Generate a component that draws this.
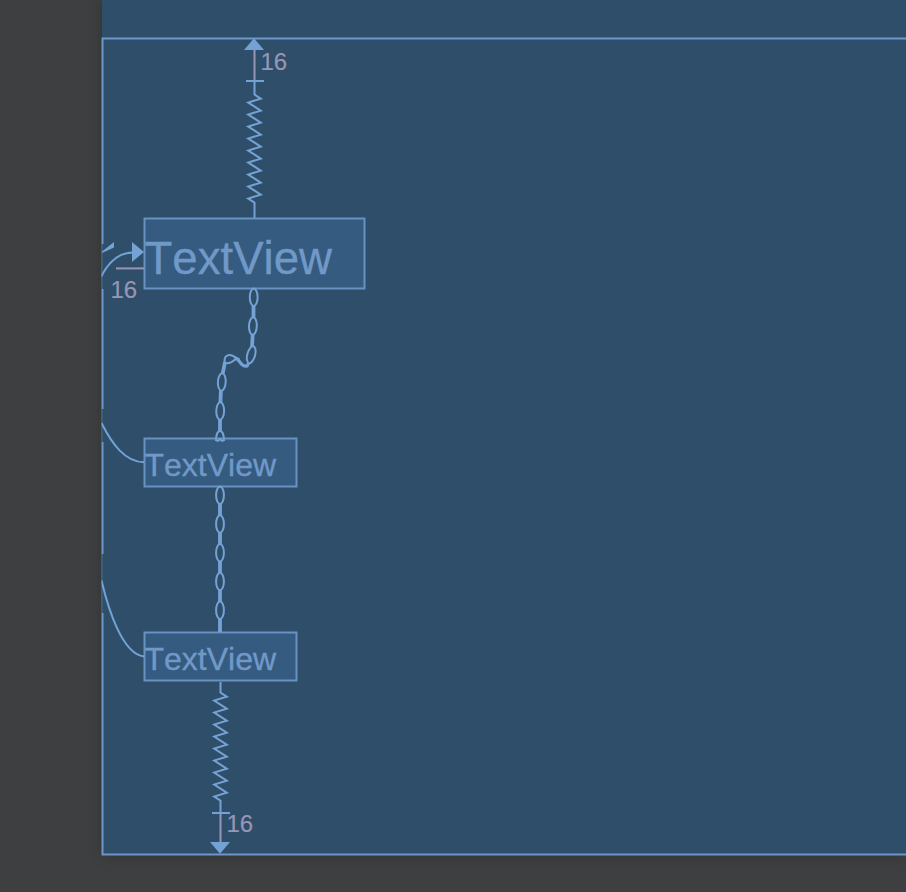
import React from "react";

const LINE = "#75a2d4";
const MARGIN = "#9796b6";

function springPoints(x: number, top: number): string {
  const pts: string[] = [`${x},${top}`];
  for (let i = 0; i < 9; i++) {
    pts.push(`${x + 6.3},${top + 4 + i * 12}`);
    pts.push(`${x - 6.3},${top + 8 + i * 12}`);
  }
  pts.push(`${x},${top + 108}`);
  return pts.join(" ");
}

function Link({ x, y, angle = 0 }: { x: number; y: number; angle?: number }) {
  return (
    <ellipse cx={x} cy={y} rx="3.900" ry="8.7" strokeWidth="2" transform={`rotate(${angle} ${x} ${y})`} />
  );
}

function Label({ className, text }: { className: string; text: string }) {
  return (
    <span className={`absolute whitespace-nowrap [font-kerning:none] ${className}`}>{text}</span>
  );
}

export default function App() {
  return (
    <div className="relative h-[892px] w-[906px] overflow-hidden bg-[#3e3f41] font-['Liberation_Sans',sans-serif]">
      <div className="ml-[102px] h-[855px] bg-[#2e4e6a] shadow-[0_0_14px_rgba(0,0,0,0.22)]" />

      <svg className="absolute left-0 top-0" width="906" height="892" viewBox="0 0 906 892" fill="none" stroke={LINE}>
        <defs>
          <clipPath id="sheet">
            <rect x="101.5" y="0" width="805" height="892" />
          </clipPath>
        </defs>

        {/* Widget frames */}
        <g fill="#355b80" stroke="#6792c2" strokeWidth="2">
          <rect x="144.5" y="218.5" width="220" height="70" />
          <rect x="144.5" y="438.5" width="152" height="48" />
          <rect x="144.5" y="632.5" width="152" height="48" />
        </g>

        {/* Root layout outline, interrupted where connections cross it */}
        <path
          d="M906 38.5H102.5V244 M102.5 289V409 M102.5 442V554 M102.5 613V854.5H906"
          stroke="#6c97c8"
          strokeWidth="2"
        />
        <path d="M101.9 244V289 M101.9 409V442 M101.9 554V613" stroke="#557b9c" strokeWidth="0.9" />

        {/* Springs and margins */}
        <g strokeWidth="2">
          <path d="M254.5 49V80" stroke={MARGIN} />
          <path d="M254.5 81V95 M254.5 202V218 M246 81H264" />
          <polyline points={springPoints(254.5, 94.6)} />
          <path d="M220.5 682V693 M220.5 800V813 M212 813H230" />
          <polyline points={springPoints(220.5, 692.6)} />
          <path d="M220.5 814V843" stroke={MARGIN} />
          <path d="M116 268.400H144" stroke={MARGIN} />
        </g>
        <g fill={LINE} stroke="none">
          <path d="M254 38.3L264 50H244Z" />
          <path d="M220 853.7L230 842H210Z" />
          <path d="M132 242V262L144 252Z" />
          <path d="M102 251.6L114 242V247.5L102 253.1Z" />
        </g>

        {/* Start-edge connections */}
        <g clipPath="url(#sheet)" strokeWidth="2">
          <path d="M101 277C108 263 119 252.5 133 252.5" />
          <path d="M101.500 423C112 444 125 462 144 462.3" />
          <path d="M101.500 580.500C108 608 122 654 144 656.5" />
        </g>

        {/* Upper chain */}
        <Link x={253.7} y={297.3} />
        <Link x={252.9} y={326} angle={2} />
        <Link x={251.2} y={354.7} angle={15} />
        <Link x={221.8} y={382} angle={3} />
        <Link x={220.2} y={411} angle={1} />
        <path d="M216 441C216 427.500 224 427.500 224 441M216 440C218 442 219 439.500 220 439C221 440 222 442 224 440" strokeWidth="2" />
        <g strokeWidth="3.8">
          <path d="M253.5 305.500V317.500 M252.7 334.500L252 347 M222.700 373.500L225 362 M220.9 390.500L220.4 402.500 M220 419.500V431" />
          <path d="M234.500 358.500C241 358.500 239.500 367.500 247 366L248.500 363.500" strokeWidth="3.2" />
        </g>
        <path d="M225 363C223.500 358 226 354.800 229.500 354.900C233 355 235 357.300 239.500 359.200M225.500 363C230 364 233.500 361 235.500 359" strokeWidth="2" />

        {/* Lower chain */}
        {[495.3, 524, 552.7, 581.5, 610.2].map((y) => (
          <Link key={y} x={220} y={y} />
        ))}
        <path
          d="M220 503.500V515.500 M220 532.500V544.500 M220 561V573 M220 590V602 M220 618.500V632"
          strokeWidth="3.8"
        />
      </svg>

      <div className="text-[#7199c8] [-webkit-text-stroke:0.35px_#7199c8]">
        <Label text="TextView" className="left-[144.5px] top-[231.5px] text-[45.600px] leading-[53px]" />
        <Label text="TextView" className="left-[144.5px] top-[447px] text-[32px] leading-[37px]" />
        <Label text="TextView" className="left-[144.5px] top-[641px] text-[32px] leading-[37px]" />
      </div>

      <div className="text-[24px] leading-[28px] text-[#9796b6] [-webkit-text-stroke:0.2px_#9796b6]">
        <Label text="16" className="left-[260.5px] top-[48px]" />
        <Label text="16" className="left-[110.5px] top-[276px]" />
        <Label text="16" className="left-[226.500px] top-[810px]" />
      </div>
    </div>
  );
}
